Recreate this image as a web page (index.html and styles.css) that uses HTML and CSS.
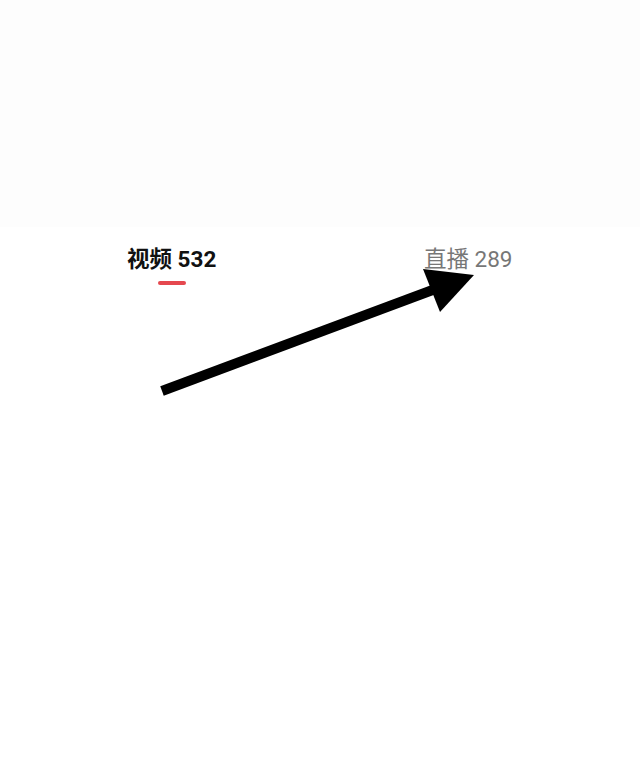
FILE: index.html
```html
<!DOCTYPE html>
<html>
<head>
<meta charset="utf-8">
<link rel="stylesheet" href="styles.css">
</head>
<body>
<div class="page">
  <div class="top"></div>
  <div class="tabs">
    <div class="tab active">
      <span class="label">视频 532</span>
      <span class="bar"></span>
    </div>
    <div class="tab">
      <span class="label">直播 289</span>
    </div>
  </div>
  <svg class="arrow" width="640" height="781" viewBox="0 0 640 781">
    <line x1="162" y1="391" x2="446" y2="285" stroke="#000" stroke-width="10"/>
    <polygon points="423,269 474,275 440,312" fill="#000"/>
  </svg>
</div>
</body>
</html>
```
FILE: styles.css
```css
html, body {
  margin: 0;
  padding: 0;
  background: #ffffff;
}
.page {
  position: relative;
  width: 640px;
  height: 781px;
  overflow: hidden;
  font-family: Roboto, "Noto Sans CJK SC", sans-serif;
}
.top {
  height: 227px;
  background: #fdfdfd;
}
.tabs {
  display: grid;
  grid-template-columns: 297px auto;
  padding-left: 127px;
  padding-top: 17px;
}
.tab {
  display: flex;
  flex-direction: column;
  align-items: center;
  justify-self: start;
}
.label {
  font-size: 22.5px;
  line-height: 30px;
  color: #777777;
  white-space: nowrap;
}
.tab.active .label {
  color: #111111;
  font-weight: 700;
}
.bar {
  width: 28px;
  height: 4px;
  border-radius: 2px;
  background: #e5484f;
  margin-top: 7px;
}
.arrow {
  position: absolute;
  left: 0;
  top: 0;
}
```
